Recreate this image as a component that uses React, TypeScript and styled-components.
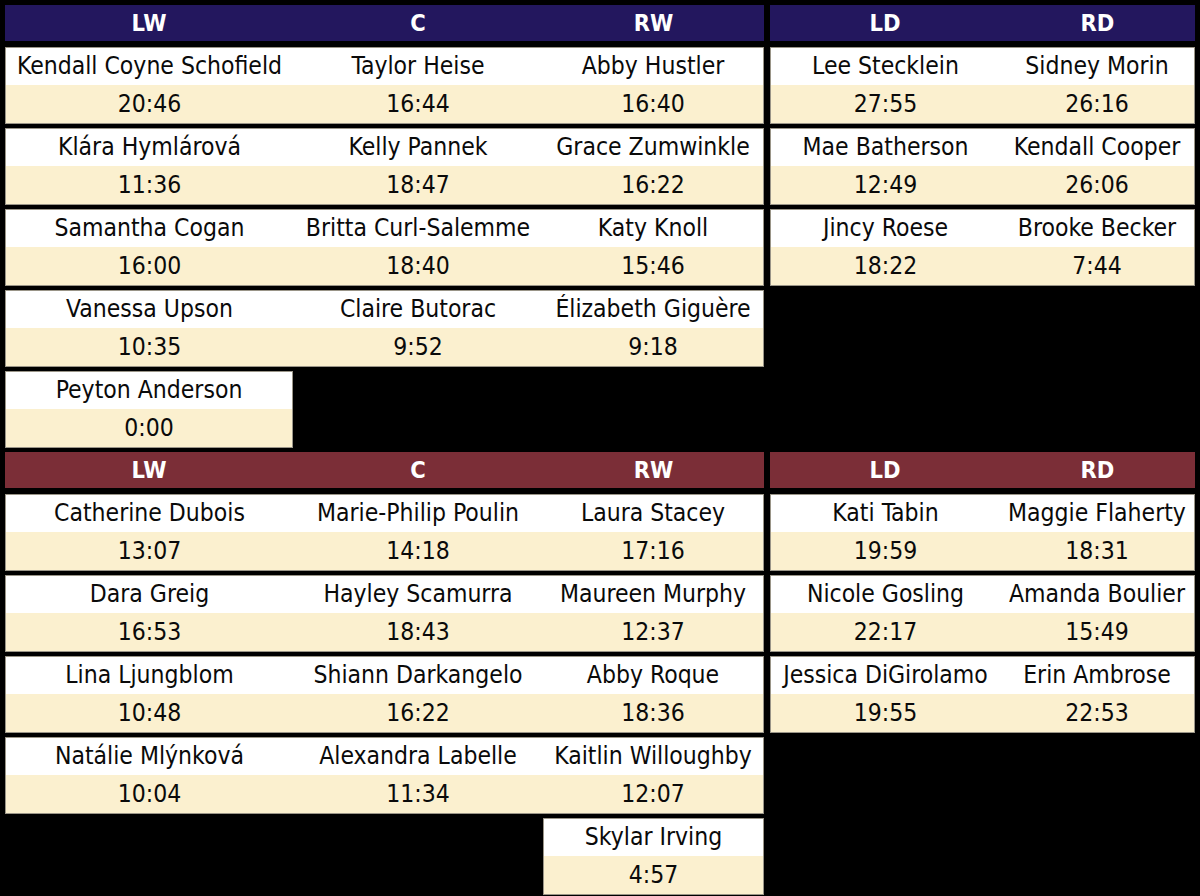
import React from "react";
import styled, { createGlobalStyle } from "styled-components";

const Global = createGlobalStyle`
  html, body { margin: 0; padding: 0; background: #000; }
  body { font-family: "DejaVu Sans Condensed", "DejaVu Sans", sans-serif; }
`;

type Player = { name: string; time: string };
type Line = (Player | null)[];

const Page = styled.div`
  width: 1200px;
  height: 896px;
  background: #000;
  padding: 5px;
  box-sizing: border-box;
  display: flex;
  flex-direction: column;
  gap: 6px;
`;

const Section = styled.div`
  display: grid;
  grid-template-columns: 759px 425px;
  column-gap: 6px;
  align-items: start;
`;

const Group = styled.div`
  display: flex;
  flex-direction: column;
  gap: 6px;
`;

const Header = styled.div<{ $cols: string; $bg: string }>`
  display: grid;
  grid-template-columns: ${(p) => p.$cols};
  height: 36px;
  background: ${(p) => p.$bg};
  color: #fff;
  font-weight: bold;
  font-size: 23.5px;
  align-items: center;
  text-align: center;
`;

const Row = styled.div<{ $cols: string }>`
  display: grid;
  grid-template-columns: ${(p) => p.$cols};
  height: 75px;
`;

const Cell = styled.div<{ $edgeL?: boolean; $edgeR?: boolean }>`
  display: grid;
  grid-template-rows: 37px 38px;
  text-align: center;
  font-size: 24.5px;
  color: #0a0a0a;
  box-sizing: border-box;
  border-top: 1px solid #9a9588;
  border-bottom: 1px solid #9a9588;
  border-left: ${(p) => (p.$edgeL ? "1px solid #9a9588" : "none")};
  border-right: ${(p) => (p.$edgeR ? "1px solid #9a9588" : "none")};
`;

const Name = styled.div`
  background: #ffffff;
  display: flex;
  align-items: center;
  justify-content: center;
  white-space: nowrap;
  padding-bottom: 3px;
`;

const Time = styled.div`
  background: #fbf0cf;
  display: flex;
  align-items: center;
  justify-content: center;
  white-space: nowrap;
  padding-bottom: 1px;
`;

const Blank = styled.div``;

const FWD_COLS = "288px 250px 221px";
const DEF_COLS = "230px 195px";

const p = (name: string, time: string): Player => ({ name, time });

const wildFwd: Line[] = [
  [p("Kendall Coyne Schofield", "20:46"), p("Taylor Heise", "16:44"), p("Abby Hustler", "16:40")],
  [p("Klára Hymlárová", "11:36"), p("Kelly Pannek", "18:47"), p("Grace Zumwinkle", "16:22")],
  [p("Samantha Cogan", "16:00"), p("Britta Curl-Salemme", "18:40"), p("Katy Knoll", "15:46")],
  [p("Vanessa Upson", "10:35"), p("Claire Butorac", "9:52"), p("Élizabeth Giguère", "9:18")],
  [p("Peyton Anderson", "0:00"), null, null],
];
const wildDef: Line[] = [
  [p("Lee Stecklein", "27:55"), p("Sidney Morin", "26:16")],
  [p("Mae Batherson", "12:49"), p("Kendall Cooper", "26:06")],
  [p("Jincy Roese", "18:22"), p("Brooke Becker", "7:44")],
];
const vicFwd: Line[] = [
  [p("Catherine Dubois", "13:07"), p("Marie-Philip Poulin", "14:18"), p("Laura Stacey", "17:16")],
  [p("Dara Greig", "16:53"), p("Hayley Scamurra", "18:43"), p("Maureen Murphy", "12:37")],
  [p("Lina Ljungblom", "10:48"), p("Shiann Darkangelo", "16:22"), p("Abby Roque", "18:36")],
  [p("Natálie Mlýnková", "10:04"), p("Alexandra Labelle", "11:34"), p("Kaitlin Willoughby", "12:07")],
  [null, null, p("Skylar Irving", "4:57")],
];
const vicDef: Line[] = [
  [p("Kati Tabin", "19:59"), p("Maggie Flaherty", "18:31")],
  [p("Nicole Gosling", "22:17"), p("Amanda Boulier", "15:49")],
  [p("Jessica DiGirolamo", "19:55"), p("Erin Ambrose", "22:53")],
];

function LineRow({ line, cols }: { line: Line; cols: string }) {
  return (
    <Row $cols={cols}>
      {line.map((pl, i) => {
        if (!pl) return <Blank key={i} />;
        const edgeL = i === 0 || !line[i - 1];
        const edgeR = i === line.length - 1 || !line[i + 1];
        return (
          <Cell key={i} $edgeL={edgeL} $edgeR={edgeR}>
            <Name>{pl.name}</Name>
            <Time>{pl.time}</Time>
          </Cell>
        );
      })}
    </Row>
  );
}

function PositionGroup({
  labels,
  cols,
  lines,
  color,
}: {
  labels: string[];
  cols: string;
  lines: Line[];
  color: string;
}) {
  return (
    <Group>
      <Header $cols={cols} $bg={color}>
        {labels.map((l) => (
          <span key={l}>{l}</span>
        ))}
      </Header>
      {lines.map((line, i) => (
        <LineRow key={i} line={line} cols={cols} />
      ))}
    </Group>
  );
}

function Team({ fwd, def, color }: { fwd: Line[]; def: Line[]; color: string }) {
  return (
    <Section>
      <PositionGroup labels={["LW", "C", "RW"]} cols={FWD_COLS} lines={fwd} color={color} />
      <PositionGroup labels={["LD", "RD"]} cols={DEF_COLS} lines={def} color={color} />
    </Section>
  );
}

export default function App() {
  return (
    <>
      <Global />
      <Page>
        <Team fwd={wildFwd} def={wildDef} color="#23175e" />
        <Team fwd={vicFwd} def={vicDef} color="#7b2e37" />
      </Page>
    </>
  );
}
